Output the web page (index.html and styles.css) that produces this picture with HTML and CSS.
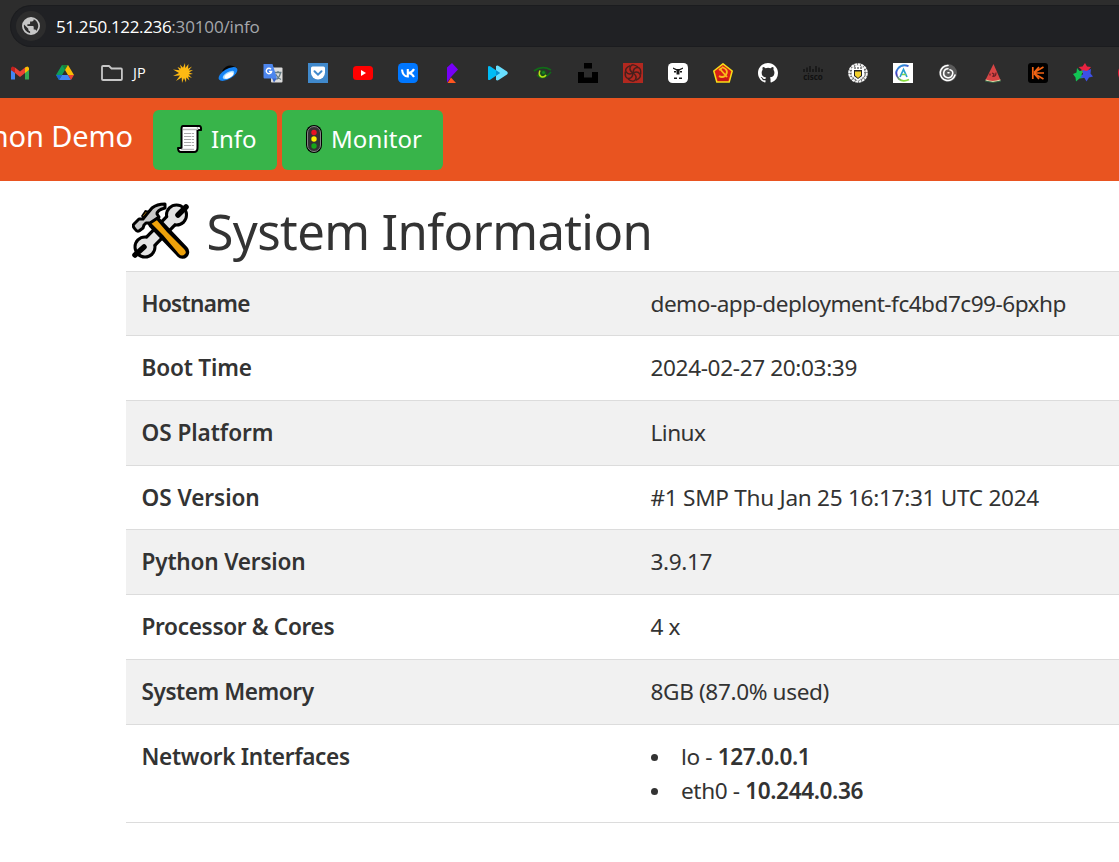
FILE: index.html
```html
<!DOCTYPE html>
<html lang="en">
<head>
<meta charset="utf-8">
<title>Python Demo</title>
<link rel="stylesheet" href="styles.css">
</head>
<body>
<header class="browser">
  <div class="address">
    <span class="site-icon">
      <svg width="18" height="18" viewBox="0 0 24 24"><path fill="#c7c7c7" d="M12 0a12 12 0 1 0 0 24 12 12 0 0 0 0-24zm-1.200 21.500A9.600 9.600 0 0 1 2.700 9.900l5.700 5.700v1.200a2.400 2.400 0 0 0 2.400 2.400zm8.300-3a2.400 2.400 0 0 0-2.300-1.700h-1.200v-3.600A1.200 1.200 0 0 0 14.400 12H7.200V9.600h2.400a1.200 1.200 0 0 0 1.200-1.200V6h2.400a2.400 2.400 0 0 0 2.400-2.400v-.5a9.600 9.600 0 0 1 3.500 15.400z"/></svg>
    </span>
    <span class="url"><span class="host">51.250.122.236</span><span class="path">:30100/info</span></span>
  </div>
  <nav class="bookmarks">
    <svg class="fav" viewBox="0 0 20 20"><path fill="#4285f4" d="M1 7v9.500h4V9z"/><path fill="#34a853" d="M15 9v7.500h4V7z"/><path fill="#fbbc04" d="M15 4.500v5.500l4-3V5q-1-2.500-3-1z"/><path fill="#c5221f" d="M5 4.500V10L1 7V5q1-2.500 3-1z"/><path fill="#ea4335" d="M5 4.500 10 8.500l5-4V10l-5 4-5-4z"/></svg>
    <svg class="fav" viewBox="0 0 20 20"><path fill="#0f9d58" d="M7 2h6L4 17l-3-5z"/><path fill="#188038" d="M7 2h6l-3 5z"/><path fill="#fbbc04" d="M10 7l3-5 6 10h-6z"/><path fill="#4285f4" d="M4 17l3-5h6l3 5z"/><path fill="#1967d2" d="M1 12h6l-3 5z"/><path fill="#ea4335" d="M13 12h6l-3 5z"/></svg>
    <span class="folder"><svg width="22" height="18" viewBox="0 0 22 18"><path fill="none" stroke="#c7c7c7" stroke-width="1.800" stroke-linejoin="round" d="M2 2h6l2.500 2.500H20q.9 0 .9 1V15q0 1-1 1H2q-1 0-1-1V3q0-1 1-1z"/></svg><span class="folder-name">JP</span></span>
    <svg class="fav" viewBox="0 0 20 20"><path fill="#fdb913" d="m12 0 .3 5L15.500 1 15 5.700 19 3.500l-3.300 4 4.300-.5-4 2.500 4 1.500-4.500.5 3.500 3.500-4-1.500 1.500 4-3.200-3-.3 5-2-4.500L9 20l-.3-5.500L3 18l4-5.500-7 .5 6-3L0 6.500l6.500.7L4.500 4 8 5.500 7 1.500l3 3.300z"/></svg>
    <svg class="fav" viewBox="0 0 20 20"><path fill="#050505" d="M4 8Q9 1 15 3l4 2-8 7z"/><ellipse cx="10" cy="11" rx="10.500" ry="5" fill="#1684f5" transform="rotate(-31 10 11)"/><ellipse cx="10.500" cy="12" rx="6.500" ry="2.900" fill="#a7dcff" transform="rotate(-31 10.500 12)"/><ellipse cx="11" cy="12.500" rx="4.800" ry="2.200" fill="#fff" transform="rotate(-28 11 12.500)"/></svg>
    <svg class="fav" viewBox="0 0 20 20"><rect x="8" y="4.500" width="11.500" height="15" rx="1" fill="#dcdcdc"/><path d="M11.500 9.500h7M15 8v1.500M17.500 10q-1.500 5-4 6.500M12.500 11q2 4 5.500 5.500" stroke="#647b83" stroke-width="1.300" fill="none"/><path fill="#3a64c8" d="m9 15 5 0-3 4.500z"/><path fill="#4d86ee" d="M1 1h8.500L14 15.500H1.500Q.5 15.500.5 14V1.500z"/><path d="M8 6.200A2.700 2.700 0 1 0 8.600 8.500H6" stroke="#fff" stroke-width="1.400" fill="none"/></svg>
    <svg class="fav" viewBox="0 0 20 20"><path fill="#4089cc" d="M0 0h20v20H0z"/><path fill="#fff" d="M4.500 3.500h11q1.500 0 1.500 1.500v4.500a7 7 0 0 1-14 0V5q0-1.500 1.500-1.500z"/><path d="m6.500 8.300 3.500 3.400 3.500-3.400" fill="none" stroke="#4089cc" stroke-width="2" stroke-linecap="round"/></svg>
    <svg class="fav" viewBox="0 0 20 20"><rect y="3" width="20" height="14" rx="3.500" fill="#f00"/><path fill="#fff" d="m8 7 5 3-5 3z"/></svg>
    <svg class="fav" viewBox="0 0 20 20"><rect width="20" height="20" rx="4.500" fill="#07f"/><path fill="none" stroke="#fff" stroke-width="2.100" d="M4 6.500q.7 7 5.800 7V6M16 6q-1.500 3.300-5.500 4 3.500.2 5.500 4"/></svg>
    <svg class="fav" viewBox="0 0 20 20"><path fill="#7700f7" d="M4 4.500 9 0l6 6.500-7 7.500-4 5.500z"/><path fill="#ff551f" d="m8 14.500 5 5.500H4.500z"/></svg>
    <svg class="fav" viewBox="0 0 20 20"><path fill="#68dfff" d="M8 3q1.500-1 3 .3l8 5.300q1.500 1.400 0 2.800l-8 5.300q-1.500 1.300-3 .3z"/><path fill="#00bcf5" d="M0 3.500q1-1 2.500 0L12 10l-9.500 6.500q-1.500 1-2.500 0z"/><path fill="#078fd0" d="m8 7.200 4 2.800-4 2.800z"/></svg>
    <svg class="fav" viewBox="0 0 20 20"><path d="M1 8q8-6 17-1M4 12q5 5 11 0l3-3" fill="none" stroke="#116b18" stroke-width="1.700"/><circle cx="10" cy="10.500" r="3.700" fill="#194d1b"/><path d="M7 7.500q-2 4 1 6 3 1.500 5-1.500" stroke="#b5df13" stroke-width="1.600" fill="none"/><circle cx="10.500" cy="9.500" r="1.600" fill="#168421"/></svg>
    <svg class="fav" viewBox="0 0 20 20"><path d="M6 0h8v5.500H6zM0 9h6v5.500h8V9h6v11H0z"/></svg>
    <svg class="fav" viewBox="0 0 20 20"><path fill="#b2281f" d="M0 0h20v20H0z"/><g fill="none" stroke="#47201d" stroke-width="1.500"><path id="petal" d="M10 10Q5.500 7 7.500 3.500T15 4"/><use href="#petal" transform="rotate(60 10 10)"/><use href="#petal" transform="rotate(120 10 10)"/><use href="#petal" transform="rotate(180 10 10)"/><use href="#petal" transform="rotate(240 10 10)"/><use href="#petal" transform="rotate(300 10 10)"/></g></svg>
    <svg class="fav" viewBox="0 0 20 20"><rect width="20" height="20" rx="4.500" fill="#fff"/><path d="M5 4.500 8.500 6h3L15 4.500v1.300L11.500 7.500v4h-3v-4L5 5.800zM6 8h2v1.500H6zM12 8h2v1.500h-2zM6 14.500h3V16H6zM11 14.500h3V16h-3z" fill="#181818"/></svg>
    <svg class="fav" viewBox="0 0 20 20"><path fill="#db2015" stroke="#f8dc17" stroke-width="1.500" d="M10 .8 19.200 8l-3 11H3.800L.8 8z"/><path d="M9 4q8 3 3 9-3 2-6 0M6 7l3-2m-2 1 7 8" fill="none" stroke="#f8bc1a" stroke-width="1.800"/><path fill="#c91616" d="M5 15h10v3H5z"/></svg>
    <svg class="fav" viewBox="0 0 16 16"><path fill="#fff" d="M8 0C3.580 0 0 3.580 0 8c0 3.540 2.290 6.530 5.470 7.590.4.070.55-.17.55-.38v-1.500c-2.010.37-2.530-.49-2.690-.94-.09-.23-.48-.94-.82-1.130-.28-.15-.68-.52-.01-.53.63-.01 1.080.58 1.230.82.72 1.210 1.870.87 2.330.66.07-.52.28-.87.51-1.070-1.780-.2-3.640-.89-3.640-3.950 0-.87.31-1.590.82-2.150-.08-.2-.36-1.020.08-2.120 0 0 .67-.21 2.200.82a7.600 7.600 0 0 1 4 0c1.530-1.040 2.200-.82 2.200-.82.44 1.100.16 1.920.08 2.120.51.56.82 1.270.82 2.150 0 3.070-1.870 3.750-3.650 3.950.29.25.54.73.54 1.480v2.200c0 .21.150.46.550.38A8 8 0 0 0 16 8c0-4.420-3.580-8-8-8z"/></svg>
    <span class="cisco"><svg width="20" height="8" viewBox="0 0 20 8"><path d="M1 4v3M4 2.500V7M7 1v6M10 4v3M13 1v6M16 2.500V7M19 4v3" stroke="#111" stroke-width="1.300"/></svg><span>cisco</span></span>
    <svg class="fav" viewBox="0 0 20 20"><circle cx="10" cy="10" r="8" fill="#333" stroke="#f5f5f5" stroke-width="3.600" stroke-dasharray="2.600 .5"/><circle cx="10" cy="10" r="7.300" fill="none" stroke="#333" stroke-width=".8" stroke-dasharray="2 1"/><path fill="#fff" d="m10 2 6 3v8l-6 5-6-5V5z"/><path fill="#222" d="M6 7h8v6l-4 3-4-3z"/><path fill="#f3d02b" d="M7 8.500h6v4L10 15l-3-2.500z"/><path d="M6 5h2M9 5h2M12 5h2" stroke="#222"/></svg>
    <svg class="fav" viewBox="0 0 20 20"><defs><linearGradient id="arc" x2=".4" y2="1"><stop stop-color="#27b8e6"/><stop offset=".5" stop-color="#4438c3"/><stop offset="1" stop-color="#86dc3c"/></linearGradient></defs><path fill="#fff" d="M0 0h20v20H0z"/><path d="M15.500 3.200Q9 .5 5 5.500T6 16q4 3.500 10 .5" fill="none" stroke="url(#arc)" stroke-width="1.900"/><path d="m7 14 3.500-7.500L14 14" fill="none" stroke="#2a9fd0" stroke-width="1.700"/><path d="M9 11.500h4" stroke="#75d552" stroke-width="1.500"/></svg>
    <svg class="fav" viewBox="0 0 20 20"><circle cx="10" cy="10" r="9" fill="#5b5b5b"/><path d="M10 2.500A7.500 7.500 0 1 0 17 12M10 5.700A4.500 4.500 0 1 0 14.300 12Q16 8 12 6.800M10 9.800h1" fill="none" stroke="#fff" stroke-width="1.600" stroke-linecap="round"/></svg>
    <svg class="fav" viewBox="0 0 20 20"><path fill="#d74545" d="M10.500 1 17.500 17q-7 3-15 0z"/><path fill="none" stroke="#e4dfad" stroke-width="1.200" d="M2.500 17q7 3 15 0"/><path fill="none" stroke="#376747" d="M2 18q8 3 16 0"/><path fill="none" stroke="#6b2025" stroke-width="1.200" d="M7 10.500v2M9 10l2 1-1 2.500q3 0 3-4"/></svg>
    <svg class="fav" viewBox="0 0 20 20"><rect width="20" height="20" rx="3" fill="#000"/><path d="M4.800 4v12M6 10h10M6 9.500 15.500 4M6 10.500l9.500 5.500M6.500 9 11 4M6.500 11l4.500 5" stroke="#f26314" stroke-width="1.700"/></svg>
    <svg class="fav" viewBox="0 0 20 20"><path fill="#ea2341" d="m12 0 2 3.500 4 .5-3 3.500 1 3.500-4-2-4 1.500.5-4L5.500 4l4-.5z"/><path fill="#12c354" d="m4 5 2.500 3 4-.5-2 4 2 3.500-4 .5L3 18.500l-.5-4L0 11l3.500-1.500z"/><path fill="#3d50e6" d="m18 6-.5 4.500 2.500 3-4 1-2.500 4-2-3.500-4.500-.5 3-3.500-.5-4 4 1z"/></svg>
    <svg class="fav" viewBox="0 0 20 20"><circle cx="10" cy="10" r="10" fill="#e3122e"/></svg>
  </nav>
</header>

<div class="navbar">
  <div class="brand">Python Demo</div>
  <a class="btn btn-info">
    <svg width="26" height="30" viewBox="0 0 26 30"><path fill="#fff" stroke="#000" stroke-width="2" stroke-linejoin="round" d="M6 2h16.500q2 .5 1.500 4h-3.500v18q0 4-3.500 4H4q-3 0-3-4h3.500V5Q4.500 2 6 2z"/><path fill="none" stroke="#bbb" stroke-width="1.500" d="M4 25.500h13M20.500 3v3M6 5.500h13"/><path d="M7 9.500h10M7 12.500h10M7 15.500h10M7 18.500h10M7 21.500h10" stroke="#aaa" stroke-dasharray="7 .7 3"/></svg>
    <span class="info-text">Info</span>
  </a>
  <a class="btn btn-monitor">
    <svg width="18" height="30" viewBox="0 0 18 30"><rect x="1" y="1" width="16" height="28" rx="8" fill="#000"/><rect x="2.500" y="2.500" width="13" height="25" rx="6.500" fill="#333" stroke="#858585"/><circle cx="9" cy="8.500" r="2.700" fill="#e81123"/><circle cx="9" cy="15" r="2.700" fill="#fff100"/><circle cx="9" cy="22" r="2.700" fill="#16a51a"/></svg>
    <span class="monitor-text">Monitor</span>
  </a>
</div>

<main class="content">
  <h1 class="title">
    <svg class="tools" width="58" height="58" viewBox="0 0 58 58">
      <g fill="#000"><circle cx="13" cy="45" r="11.500"/><circle cx="44.500" cy="13" r="11.500"/></g>
      <path d="M13 45 44.500 13" stroke="#000" stroke-width="15"/>
      <g fill="#e3e3e3"><circle cx="13" cy="45" r="8.500"/><circle cx="44.500" cy="13" r="8.500"/></g>
      <path d="M13 45 44.500 13" stroke="#e3e3e3" stroke-width="8.500"/>
      <path d="m3 53 9-8M54 5l-8 8" stroke="#000" stroke-width="5.500" stroke-linecap="round"/>
      <path d="m22 20 28.500 30" stroke="#000" stroke-width="13.500" stroke-linecap="round"/>
      <path fill="#eea20b" d="m18 20 5-4 12 14 17 17q3 3 1 5-3 3-6 0L31 33z"/>
      <path fill="#000" d="m9 14 4-6 5 1 1 7-6 4z"/><path fill="#eea20b" d="m11 14 3-4 3 1v5z"/>
      <path fill="#c8c8c8" stroke="#000" stroke-width="3" stroke-linejoin="round" d="M15 12 20 6Q25 2 33 2v4q-8 2-8 6l2 3-9 6-4 0-2 2-1 3-4 3q-2 1-4-2-3-3-1-5l5-5h4z"/>
    </svg>
    <span>System Information</span>
  </h1>
  <div class="table">
    <div class="row"><div class="label hostname">Hostname</div><div class="value pod">demo-app-deployment-fc4bd7c99-6pxhp</div></div>
    <div class="row"><div class="label boot">Boot Time</div><div class="value">2024-02-27 20:03:39</div></div>
    <div class="row"><div class="label wide">OS Platform</div><div class="value pod">Linux</div></div>
    <div class="row"><div class="label wide">OS Version</div><div class="value kernel">#1 SMP Thu Jan 25 16:17:31 UTC 2024</div></div>
    <div class="row"><div class="label boot">Python Version</div><div class="value">3.9.17</div></div>
    <div class="row"><div class="label">Processor &amp; Cores</div><div class="value">4 x</div></div>
    <div class="row"><div class="label memory">System Memory</div><div class="value">8GB (87.0% used)</div></div>
    <div class="row last"><div class="label">Network Interfaces</div><ul class="value interfaces"><li>lo - <b>127.0.0.1</b></li><li>eth0 - <b>10.244.0.36</b></li></ul></div>
  </div>
</main>
</body>
</html>
```
FILE: styles.css
```css
* { box-sizing: border-box; }
body {
  margin: 0;
  height: 862px;
  overflow: hidden;
  background: #fff;
  color: #333;
  font-family: "Noto Sans", "Open Sans", sans-serif;
}
svg { flex: none; display: block; }

.browser {
  height: 98px;
  padding-top: 5px;
  background: #2d2d2d;
  overflow: hidden;
}
.address {
  display: flex;
  align-items: center;
  height: 42px;
  margin-left: 10px;
  padding-left: 5px;
  border: 1px solid #1b1c1f;
  border-right: 0;
  border-radius: 21px 0 0 21px;
  background: #202124;
}
.site-icon {
  display: flex;
  align-items: center;
  justify-content: center;
  width: 30px;
  height: 30px;
  border-radius: 50%;
  background: #2d2d2d;
}
.url {
  margin-left: 10px;
  font: 17px "Open Sans", sans-serif;
  white-space: nowrap;
}
.host { color: #fff; letter-spacing: -0.36px; }
.path { color: #a5a8ac; letter-spacing: -0.15px; }

.bookmarks {
  display: flex;
  align-items: center;
  gap: 25px;
  height: 51px;
  padding-left: 10px;
}
.fav { width: 20px; height: 20px; }
.folder {
  display: flex;
  flex: none;
  align-items: center;
  gap: 10px;
  width: 47px;
  margin-left: 1px;
}
.folder-name { color: #fff; font: 14.500px "Open Sans", sans-serif; }
.cisco {
  display: flex;
  flex: none;
  flex-direction: column;
  align-items: center;
  width: 20px;
  color: #111;
  font: bold 8px/8px "Open Sans", sans-serif;
}

.navbar {
  display: flex;
  align-items: center;
  height: 83px;
  background: #e95420;
  color: #fff;
}
.brand {
  display: flex;
  justify-content: flex-end;
  width: 133px;
  margin-right: 20px;
  padding-bottom: 8px;
  overflow: hidden;
  white-space: nowrap;
  font-size: 29px;
  letter-spacing: -0.1px;
}
.btn {
  display: flex;
  align-items: center;
  height: 60px;
  border-radius: 6px;
  background: #38b44a;
  font-size: 24px;
}
.btn svg { margin-bottom: 1px; }
.btn span { padding-bottom: 2px; }
.btn-info { width: 124px; margin-right: 5px; padding-left: 24px; gap: 8px; }
.btn-monitor { width: 161px; padding-left: 23px; gap: 8px; }
.info-text { letter-spacing: -0.1px; }
.monitor-text { letter-spacing: 0.1px; }

.content { margin-left: 126px; }
.title {
  display: flex;
  align-items: center;
  gap: 16.500px;
  height: 89.700px;
  margin: 0;
  padding: 10px 0 0 6px;
  font-size: 49px;
  font-weight: 400;
  letter-spacing: -0.6px;
  line-height: 66px;
  white-space: nowrap;
}
.table { font-size: 22.6px; line-height: 34px; }
.row {
  display: grid;
  grid-template-columns: 509px 1fr;
  height: 64.7px;
  padding: 15px 0 0 15.5px;
  border-top: 1px solid #dcdcdc;
  white-space: nowrap;
}
.row:nth-child(odd) { background: #f1f1f1; }
.last { height: 99.400px; border-bottom: 1px solid #dcdcdc; }
.label { font-weight: 600; letter-spacing: -0.33px; }
.label.hostname { letter-spacing: -0.7px; }
.label.boot { letter-spacing: -0.2px; }
.label.wide { letter-spacing: -0.06px; }
.label.memory { letter-spacing: -0.45px; }
.value { letter-spacing: -0.37px; }
.value.pod { letter-spacing: -0.51px; }
.value.kernel { letter-spacing: -0.29px; }
.interfaces { margin: 0; padding: 0; list-style: none; }
.interfaces li { display: flex; align-items: center; white-space: pre; }
.interfaces li::before {
  content: "";
  width: 7px;
  height: 7px;
  margin: 2px 23.500px 0 0;
  border-radius: 50%;
  background: #333;
}
.interfaces b { font-weight: 600; letter-spacing: -0.4px; }
```
